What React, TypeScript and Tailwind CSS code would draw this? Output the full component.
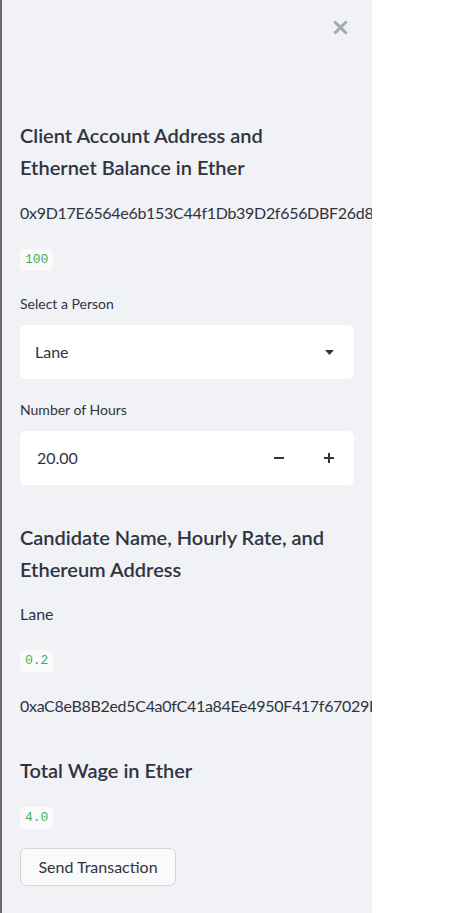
import React from 'react';

const Code = ({ children }: { children: React.ReactNode }) => (
  <div className="flex">
    <span className="h-[22px] px-[5px] flex items-center rounded-[4px] bg-[#fafafa] text-[#3fae5a] text-[13px] font-['Liberation_Mono',monospace]">
      {children}
    </span>
  </div>
);

const Heading = ({ children, className = '' }: { children: React.ReactNode; className?: string }) => (
  <h3 className={`text-[20px] leading-[32px] font-semibold text-[#31333f] ${className}`}>{children}</h3>
);

export default function App() {
  return (
    <div className="w-[475px] h-[913px] bg-white flex font-['Lato',sans-serif] text-[#31333f]">
      <div className="w-[372px] h-full border-l-2 border-[#6b6b6b] bg-[#f0f2f6] overflow-hidden flex flex-col px-[18px]">
        <div className="flex justify-end pt-[20px] pr-[6px]">
          <svg width="15" height="15" viewBox="0 0 15 15">
            <path d="M2.5 2.5 L12.5 12.5 M12.5 2.5 L2.5 12.5" stroke="#a3a8b4" strokeWidth="3" strokeLinecap="square" />
          </svg>
        </div>

        <Heading className="mt-[84px]">
          Client Account Address and
          <br />
          Ethernet Balance in Ether
        </Heading>
        <div className="mt-[18px] text-[16px] leading-[24px] tracking-[-0.3px] whitespace-nowrap">0x9D17E6564e6b153C44f1Db39D2f656DBF26d8605</div>
        <div className="mt-[24px]">
          <Code>100</Code>
        </div>

        <label className="mt-[23px] text-[14px] leading-[20px]">Select a Person</label>
        <div className="mt-[11px] h-[54px] bg-white rounded-[6px] flex items-center justify-between pl-[15px] pr-[20px]">
          <span className="text-[16px]">Lane</span>
          <svg width="9" height="5" viewBox="0 0 9 5">
            <path d="M0 0 H9 L4.5 5 Z" fill="#31333f" />
          </svg>
        </div>

        <label className="mt-[21px] text-[14px] leading-[20px]">Number of Hours</label>
        <div className="mt-[11px] h-[54px] bg-white rounded-[6px] flex items-center">
          <span className="flex-1 pl-[17px] text-[16px]">20.00</span>
          <div className="w-[50px] flex justify-center">
            <svg width="10" height="2" viewBox="0 0 10 2">
              <rect width="10" height="2" fill="#31333f" />
            </svg>
          </div>
          <div className="w-[50px] flex justify-center">
            <svg width="10" height="10" viewBox="0 0 10 10">
              <rect y="4" width="10" height="2" fill="#31333f" />
              <rect x="4" width="2" height="10" fill="#31333f" />
            </svg>
          </div>
        </div>

        <Heading className="mt-[36px]">
          Candidate Name, Hourly Rate, and
          <br />
          Ethereum Address
        </Heading>
        <div className="mt-[17px] text-[16px] leading-[24px]">Lane</div>
        <div className="mt-[24px]">
          <Code>0.2</Code>
        </div>
        <div className="mt-[22px] text-[16px] leading-[24px] tracking-[-0.3px] whitespace-nowrap">0xaC8eB8B2ed5C4a0fC41a84Ee4950F417f67029F0</div>

        <Heading className="mt-[36px]">Total Wage in Ether</Heading>
        <div className="mt-[21px]">
          <Code>4.0</Code>
        </div>
        <div className="mt-[19px] flex">
          <button className="h-[38px] w-[156px] rounded-[6px] border border-[#d6d6d9] bg-[#fafafa] text-[16px] text-[#31333f]">
            Send Transaction
          </button>
        </div>
      </div>
    </div>
  );
}
